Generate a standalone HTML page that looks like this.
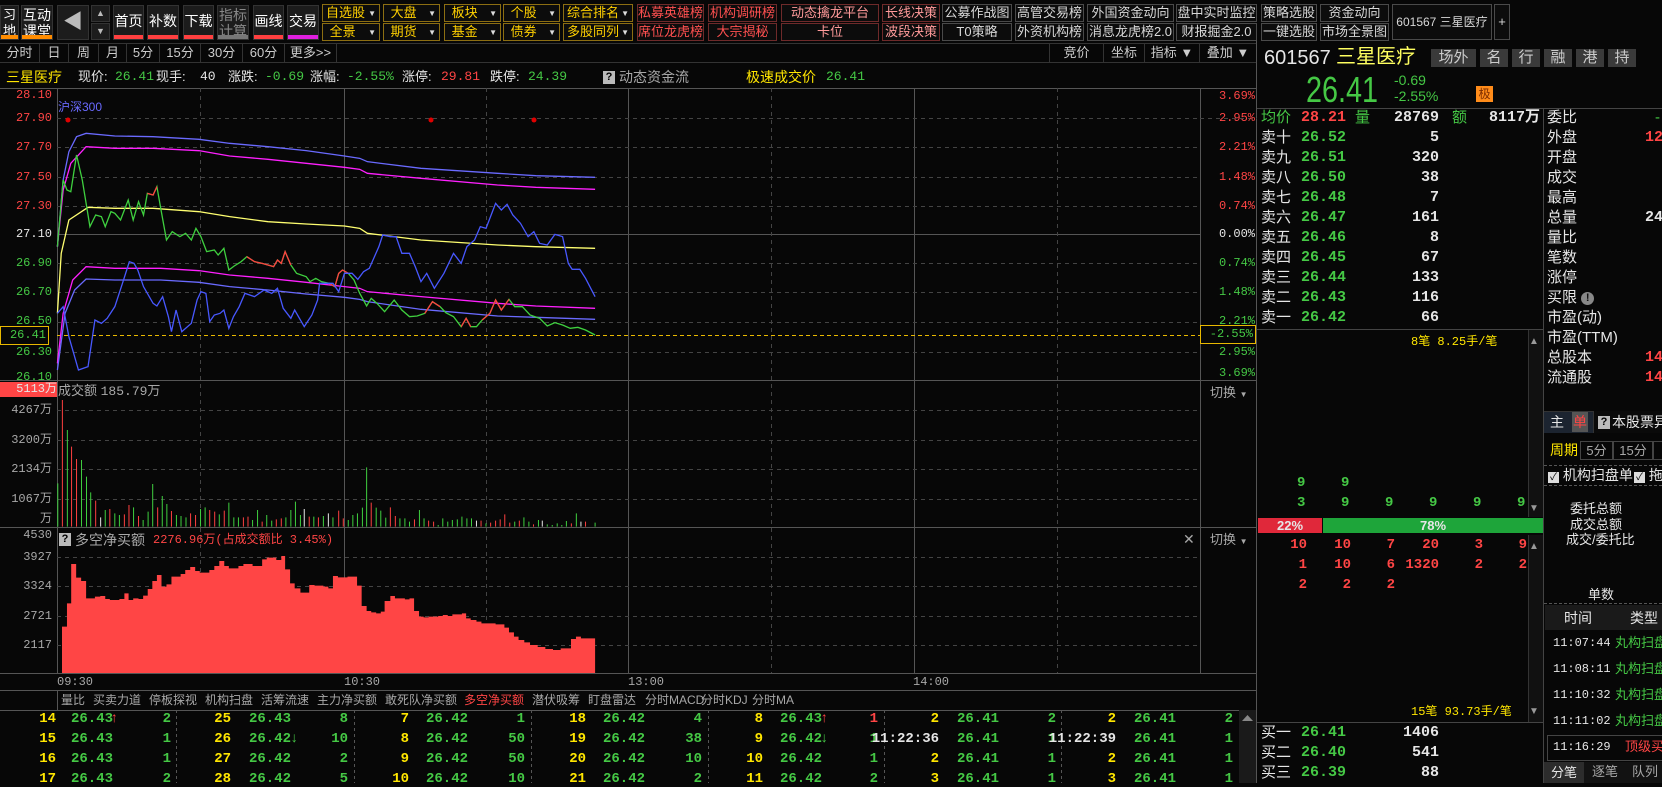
<!DOCTYPE html>
<html><head><meta charset="utf-8">
<style>
*{margin:0;padding:0;box-sizing:border-box}
body{width:1662px;height:783px;background:#070707;overflow:hidden;position:relative;font-family:"Liberation Sans","Noto Sans CJK SC",sans-serif;font-size:13px;color:#d0d0d0}
.a{position:absolute;white-space:nowrap;line-height:16px}
.y{color:#ffe600}.g{color:#45c845}.r{color:#ff4545}.w{color:#e6e6e6}.gr{color:#a8a8a8}
.tb{position:absolute;height:18px;line-height:16px;font-size:13px;text-align:left;padding-left:3px}
.dd{border:1px solid #8c6e12;color:#ffd000;background:#0c0c0c}
.dd:after{content:"▼";position:absolute;right:3px;top:1px;font-size:8px;color:#ddd}
.rd{border:1px solid #6e2a2a;color:#ff5050;background:#0c0c0c;text-align:center;padding:0}
.pk{border:1px solid #6e2a2a;color:#ff9a9a;background:#0c0c0c;text-align:center;padding:0}
.gy{border:1px solid #4a4a4a;color:#d8d8d8;background:#0c0c0c;text-align:center;padding:0}
.big{position:absolute;top:5px;height:35px;background:#1c1c1c;border:1px solid #333;color:#fff;font-size:14px;text-align:center;line-height:16px}
.big i{position:absolute;left:0;right:0;bottom:0;height:4px}
.tab{position:absolute;top:44px;height:18px;border-right:1px solid #333;text-align:center;line-height:18px;color:#ccc}
.m{font-family:"Liberation Mono","Noto Sans CJK SC",monospace}
.ob{font-size:15px;font-weight:bold}
.wr{position:absolute;left:0;top:0;width:1662px;height:783px}
.il{font-size:13px}
</style></head><body>

<div class="big" style="left:0;width:19px;font-size:13px;padding-top:1px">习<br>地<i style="background:#ff8c00"></i></div>
<div class="big" style="left:21px;width:32px;padding-top:1px">互动<br>课堂<i style="background:#ff8c00"></i></div>
<div class="big" style="left:57px;width:32px;line-height:33px;color:#bbb;font-size:20px">◀</div>
<div class="big" style="left:91px;width:19px;height:17px;font-size:9px;line-height:15px;color:#bbb">▲</div>
<div class="big" style="left:91px;top:23px;width:19px;height:17px;font-size:9px;line-height:15px;color:#bbb">▼</div>
<div class="big" style="left:113px;width:31px;line-height:30px">首页<i style="background:#ff4040"></i></div>
<div class="big" style="left:147px;width:32px;line-height:30px">补数<i style="background:#ff4040"></i></div>
<div class="big" style="left:183px;width:31px;line-height:30px">下载<i style="background:#ff4040"></i></div>
<div class="big" style="left:217px;width:32px;color:#888;padding-top:1px">指标<br>计算<i style="background:#777"></i></div>
<div class="big" style="left:253px;width:31px;line-height:30px">画线<i style="background:#ff4040"></i></div>
<div class="big" style="left:287px;width:32px;line-height:30px">交易<i style="background:#e020e0"></i></div>

<div class="tb dd" style="left:322px;top:4px;width:58px">自选股</div>
<div class="tb dd" style="left:383px;top:4px;width:57px">&nbsp;大盘</div>
<div class="tb dd" style="left:444px;top:4px;width:57px">&nbsp;板块</div>
<div class="tb dd" style="left:503px;top:4px;width:57px">&nbsp;个股</div>
<div class="tb dd" style="left:563px;top:4px;width:70px">综合排名</div>
<div class="tb rd" style="left:637px;top:4px;width:67px">私募英雄榜</div>
<div class="tb rd" style="left:708px;top:4px;width:69px">机构调研榜</div>
<div class="tb pk" style="left:781px;top:4px;width:98px">动态擒龙平台2.0</div>
<div class="tb pk" style="left:882px;top:4px;width:58px">长线决策</div>
<div class="tb gy" style="left:942px;top:4px;width:70px">公募作战图</div>
<div class="tb gy" style="left:1015px;top:4px;width:69px">高管交易榜</div>
<div class="tb gy" style="left:1087px;top:4px;width:87px">外国资金动向</div>
<div class="tb gy" style="left:1176px;top:4px;width:81px">盘中实时监控</div>
<div class="tb gy" style="left:1261px;top:4px;width:56px">策略选股</div>
<div class="tb gy" style="left:1320px;top:4px;width:69px">资金动向</div>
<div class="tb gy" style="left:1392px;top:4px;width:100px;height:36px;line-height:34px;font-size:12px">601567 三星医疗</div>
<div class="tb gy" style="left:1494px;top:4px;width:16px;height:36px;line-height:34px">+</div>
<div class="tb dd" style="left:322px;top:23px;width:58px">&nbsp;全景</div>
<div class="tb dd" style="left:383px;top:23px;width:57px">&nbsp;期货</div>
<div class="tb dd" style="left:444px;top:23px;width:57px">&nbsp;基金</div>
<div class="tb dd" style="left:503px;top:23px;width:57px">&nbsp;债券</div>
<div class="tb dd" style="left:563px;top:23px;width:70px">多股同列</div>
<div class="tb rd" style="left:637px;top:23px;width:67px">席位龙虎榜</div>
<div class="tb rd" style="left:708px;top:23px;width:69px">大宗揭秘</div>
<div class="tb pk" style="left:781px;top:23px;width:98px">卡位</div>
<div class="tb pk" style="left:882px;top:23px;width:58px">波段决策</div>
<div class="tb gy" style="left:942px;top:23px;width:70px">T0策略</div>
<div class="tb gy" style="left:1015px;top:23px;width:69px">外资机构榜</div>
<div class="tb gy" style="left:1087px;top:23px;width:87px">消息龙虎榜2.0</div>
<div class="tb gy" style="left:1176px;top:23px;width:81px">财报掘金2.0</div>
<div class="tb gy" style="left:1261px;top:23px;width:56px">一键选股</div>
<div class="tb gy" style="left:1320px;top:23px;width:69px">市场全景图</div>

<div style="position:absolute;left:0;top:43px;width:1257px;height:1px;background:#333"></div>
<div style="position:absolute;left:0;top:62px;width:1257px;height:1px;background:#333"></div>
<div class="tab r" style="left:0;width:40px">分时</div>
<div class="tab" style="left:40px;width:29px">日</div>
<div class="tab" style="left:69px;width:30px">周</div>
<div class="tab" style="left:99px;width:28px">月</div>
<div class="tab" style="left:127px;width:33px">5分</div>
<div class="tab" style="left:160px;width:41px">15分</div>
<div class="tab" style="left:201px;width:42px">30分</div>
<div class="tab" style="left:243px;width:42px">60分</div>
<div class="tab" style="left:285px;width:52px">更多&gt;&gt;</div>
<div class="tab" style="left:1049px;width:55px;border-left:1px solid #333">竞价</div>
<div class="tab" style="left:1104px;width:41px">坐标</div>
<div class="tab" style="left:1145px;width:55px">指标 ▼</div>
<div class="tab" style="left:1200px;width:57px">叠加 ▼</div>

<div class="a y il" style="left:6px;top:69px;font-size:14px">三星医疗</div>
<div class="a w il" style="left:78px;top:69px">现价:</div><div class="a g m" style="left:115px;top:69px">26.41</div>
<div class="a w il" style="left:156px;top:69px">现手:</div><div class="a w m" style="left:200px;top:69px">40</div>
<div class="a w il" style="left:228px;top:69px">涨跌:</div><div class="a g m" style="left:265px;top:69px">-0.69</div>
<div class="a w il" style="left:310px;top:69px">涨幅:</div><div class="a g m" style="left:347px;top:69px">-2.55%</div>
<div class="a w il" style="left:402px;top:69px">涨停:</div><div class="a r m" style="left:441px;top:69px">29.81</div>
<div class="a w il" style="left:490px;top:69px">跌停:</div><div class="a g m" style="left:528px;top:69px">24.39</div>
<div class="a" style="left:603px;top:71px;width:12px;height:13px;background:#bbb;color:#000;font-size:11px;line-height:13px;text-align:center;font-weight:bold">?</div>
<div class="a gr" style="left:619px;top:69px;font-size:14px">动态资金流</div>
<div class="a y" style="left:746px;top:69px;font-size:14px">极速成交价</div><div class="a g m" style="left:826px;top:69px">26.41</div>

<svg style="position:absolute;left:0;top:0" width="1257" height="783">
<g stroke="#555" stroke-width="1" fill="none">
<line x1="57.5" y1="88" x2="57.5" y2="673"/>
<line x1="1200.5" y1="88" x2="1200.5" y2="673"/>
<line x1="0" y1="88.5" x2="1257" y2="88.5"/>
<line x1="0" y1="380.5" x2="1257" y2="380.5"/>
<line x1="0" y1="527.5" x2="1257" y2="527.5"/>
<line x1="0" y1="673.5" x2="1257" y2="673.5"/>
<line x1="0" y1="690.5" x2="1257" y2="690.5"/>
<line x1="0" y1="710.5" x2="1257" y2="710.5"/>
<line x1="1256.5" y1="40" x2="1256.5" y2="783"/>
<line x1="344.5" y1="88" x2="344.5" y2="673"/>
<line x1="628.5" y1="88" x2="628.5" y2="673"/>
<line x1="914.5" y1="88" x2="914.5" y2="673"/>
<line x1="57.5" y1="234.5" x2="1200" y2="234.5"/>
</g>
<g stroke="#444" stroke-width="1" stroke-dasharray="4,4" fill="none">
<line x1="200.5" y1="88" x2="200.5" y2="673"/><line x1="486.5" y1="88" x2="486.5" y2="673"/>
<line x1="771.5" y1="88" x2="771.5" y2="673"/><line x1="1057.5" y1="88" x2="1057.5" y2="673"/>
<line x1="57" y1="118.5" x2="1200" y2="118.5"/><line x1="57" y1="147.5" x2="1200" y2="147.5"/>
<line x1="57" y1="177.5" x2="1200" y2="177.5"/><line x1="57" y1="206.5" x2="1200" y2="206.5"/>
<line x1="57" y1="263.5" x2="1200" y2="263.5"/><line x1="57" y1="292.5" x2="1200" y2="292.5"/>
<line x1="57" y1="322.5" x2="1200" y2="322.5"/><line x1="57" y1="352.5" x2="1200" y2="352.5"/>
<line x1="57" y1="410.5" x2="1200" y2="410.5"/><line x1="57" y1="440.5" x2="1200" y2="440.5"/>
<line x1="57" y1="469.5" x2="1200" y2="469.5"/><line x1="57" y1="499.5" x2="1200" y2="499.5"/>
<line x1="57" y1="557.5" x2="1200" y2="557.5"/><line x1="57" y1="586.5" x2="1200" y2="586.5"/>
<line x1="57" y1="616.5" x2="1200" y2="616.5"/><line x1="57" y1="645.5" x2="1200" y2="645.5"/>
<line x1="1200" y1="118.5" x2="1257" y2="118.5"/>
</g>
<line x1="57" y1="335.5" x2="1200" y2="335.5" stroke="#e8b800" stroke-dasharray="4,3"/>

<g transform="translate(0,80) scale(0.38270,0.33333)" fill="none" stroke-width="1.3">
<polyline vector-effect="non-scaling-stroke" stroke="#6a6aff" points="150,500 165,300 180,215 200,170 225,160 300,168 400,170 520,178 600,190 700,200 800,212 900,228 940,235 960,245 1100,265 1300,280 1400,287 1555,292"/>
<polyline vector-effect="non-scaling-stroke" stroke="#ff20ff" points="150,500 165,330 185,250 225,200 300,205 400,205 520,212 600,228 700,238 800,250 900,262 940,268 960,280 1100,295 1300,315 1400,322 1555,328"/>
<polyline vector-effect="non-scaling-stroke" stroke="#ffff70" points="150,700 160,520 180,420 230,382 300,385 400,385 520,395 600,410 700,425 800,432 900,438 940,445 960,460 1100,480 1300,495 1400,500 1555,505"/>
<polyline vector-effect="non-scaling-stroke" stroke="#ff20ff" points="150,850 165,700 190,600 225,560 300,565 420,565 520,572 600,585 700,595 800,607 900,620 940,625 960,635 1100,650 1300,670 1400,678 1555,685"/>
<polyline vector-effect="non-scaling-stroke" stroke="#6a6aff" points="150,870 170,700 195,630 225,597 300,600 420,600 520,607 600,620 700,630 800,642 900,652 940,658 960,665 1100,688 1300,708 1400,712 1555,718"/>
<polyline vector-effect="non-scaling-stroke" stroke="#3fd03f" points="150,500 165,300 175,330 185,335 200,225 215,300 235,440 250,405 265,410 275,440 290,395 300,400 315,420 335,360 348,420 362,365 375,405 385,340 400,345 410,320 420,385 435,480 450,455 470,470 485,460 500,480 512,445 525,470 540,515 560,510 570,525 585,505 598,570 612,558 630,545 645,530 665,545 685,550 700,555 715,560 725,540 735,550 745,515 760,555 775,580 800,590 810,605 825,595 840,605 860,610 875,620 885,580 895,570 910,580 925,600 940,640 958,678 970,655 985,670 1005,695 1030,660 1050,690 1070,710 1090,708 1110,700 1130,665 1150,680 1165,698 1185,710 1205,740 1218,715 1230,740 1245,740 1260,720 1280,700 1295,660 1310,690 1330,658 1345,680 1365,680 1385,705 1410,715 1430,738 1450,728 1470,735 1490,745 1510,742 1530,750 1555,765"/>
<polyline vector-effect="non-scaling-stroke" stroke="#ff4040" points="385,340 400,345 410,320"/>
<polyline vector-effect="non-scaling-stroke" stroke="#ff4040" points="645,530 665,545 685,550 700,555 715,560 725,540 735,550 745,515 760,555"/>
<polyline vector-effect="non-scaling-stroke" stroke="#ff4040" points="860,610 875,620 885,580 895,570 910,580"/>
<polyline vector-effect="non-scaling-stroke" stroke="#ff4040" points="1110,700 1130,665 1150,680"/>
<polyline vector-effect="non-scaling-stroke" stroke="#ff4040" points="1205,740 1218,715 1230,740"/>
<polyline vector-effect="non-scaling-stroke" stroke="#ff4040" points="1260,720 1280,700 1295,660 1310,690 1330,658"/>
<polyline vector-effect="non-scaling-stroke" stroke="#4858ff" points="150,700 165,680 180,770 205,870 230,860 248,720 265,730 280,715 300,680 320,610 338,545 350,550 360,570 375,620 400,670 410,678 425,650 440,710 448,755 460,690 475,755 500,730 515,660 525,635 538,640 548,725 560,705 575,700 585,690 598,745 610,710 625,680 640,640 665,650 690,630 710,640 725,625 740,685 760,715 770,690 795,740 815,705 830,660 835,610 850,610 870,610 885,635 900,580 920,580 935,598 950,575 965,565 990,500 1000,465 1020,470 1035,470 1050,520 1070,520 1085,560 1100,605 1115,580 1135,625 1160,580 1185,520 1205,550 1220,500 1240,480 1255,440 1270,445 1285,400 1295,370 1310,390 1325,373 1340,405 1360,430 1380,470 1395,455 1410,490 1430,495 1450,463 1470,470 1485,550 1495,568 1515,568 1530,595 1555,650"/>
</g>
<circle cx="68" cy="120" r="2.5" fill="#e00000"/><circle cx="431" cy="120" r="2.5" fill="#e00000"/><circle cx="534" cy="120" r="2.5" fill="#e00000"/>
<text x="58" y="111" fill="#6a6aff" font-size="12" font-family="Liberation Sans,Noto Sans CJK SC,sans-serif">沪深300</text>

<g transform="translate(0,355) scale(0.38270,0.33333)">
<g stroke-width="2.6">
<path stroke="#3fd03f" d="M151 515V385M176 515V225M213 515V315M226 515V365M237 515V412M275 515V465M300 515V475M312 515V480M349 515V457M374 515V495M387 515V470M399 515V387M424 515V423M436 515V447M461 515V480M473 515V483M486 515V487M524 515V462M536 515V457M573 515V478M598 515V443M611 515V487M623 515V487M660 515V495M673 515V465M697 515V480M710 515V497M747 515V487M760 515V465M772 515V440M785 515V480M820 515V485M845 515V483M870 515V487M910 515V495M922 515V480M934 515V475M947 515V458M958 515V337M983 515V458M995 515V467M1008 515V488M1045 515V490M1058 515V490M1070 515V500M1096 515V465M1108 515V490M1145 515V510M1157 515V490M1170 515V500M1182 515V495M1195 515V493M1207 515V485M1220 515V490M1232 515V490M1270 515V505M1345 515V500M1369 515V487M1382 515V500M1407 515V495M1430 515V508M1443 515V510M1456 515V505M1468 515V510M1480 515V498M1506 515V475M1555 515V503"/>
<path stroke="#ff4040" d="M163 515V135M187 515V275M200 515V312M250 515V437M287 515V462M325 515V478M337 515V450M362 515V483M412 515V457M448 515V468M498 515V475M511 515V480M548 515V465M561 515V470M586 515V467M636 515V487M648 515V485M685 515V500M722 515V493M735 515V490M808 515V485M832 515V487M885 515V467M897 515V490M970 515V443M1020 515V457M1033 515V483M1083 515V493M1120 515V497M1133 515V500M1257 515V497M1282 515V503M1295 515V497M1307 515V493M1319 515V478M1332 515V503M1357 515V497M1394 515V508M1493 515V505M1530 515V500"/>
<path stroke="#e8e8e8" d="M263 515V487M795 515V462M858 515V475M1245 515V497M1417 515V497M1518 515V500"/>
</g>
<polygon fill="#ff4545" points="162,954 162,815 175,815 175,745 186,745 186,627 199,627 199,668 212,668 212,678 225,678 225,730 248,730 248,725 262,725 262,723 275,723 275,732 287,732 287,735 312,735 312,732 325,732 325,715 336,715 336,735 348,735 348,730 362,730 362,732 374,732 374,722 386,722 386,702 398,702 398,678 410,678 410,660 422,660 422,695 435,695 435,688 448,688 448,665 472,665 472,657 484,657 484,645 497,645 497,636 510,636 510,648 522,648 522,653 547,653 547,645 560,645 560,633 573,633 573,618 586,618 586,633 598,633 598,640 623,640 623,633 636,633 636,627 660,627 660,633 685,633 685,613 697,613 697,608 722,608 722,615 735,615 735,603 745,603 745,643 758,643 758,685 770,685 770,700 785,700 785,713 808,713 808,690 822,690 822,692 845,692 845,695 858,695 858,700 870,700 870,663 883,663 883,667 908,667 908,665 933,665 933,692 945,692 945,753 958,753 958,768 970,768 970,772 983,772 983,775 995,775 995,770 1005,770 1005,738 1020,738 1020,723 1032,723 1032,730 1058,730 1058,733 1070,733 1070,730 1082,730 1082,768 1095,768 1095,785 1107,785 1107,787 1120,787 1120,785 1145,785 1145,783 1157,783 1157,780 1170,780 1170,783 1182,783 1182,778 1207,778 1207,775 1218,775 1218,790 1230,790 1230,795 1245,795 1245,800 1258,800 1258,805 1295,805 1295,808 1318,808 1318,818 1330,818 1330,832 1343,832 1343,845 1355,845 1355,855 1370,855 1370,862 1385,862 1385,870 1405,870 1405,876 1425,876 1425,882 1445,882 1445,885 1465,885 1465,880 1492,880 1492,852 1505,852 1505,845 1518,845 1518,850 1555,850 1555,954"/>
</g>
</svg>

<div class="a r m" style="right:1610px;top:87px;font-size:12px">28.10</div>
<div class="a r m" style="right:1610px;top:110px;font-size:12px">27.90</div>
<div class="a r m" style="right:1610px;top:139px;font-size:12px">27.70</div>
<div class="a r m" style="right:1610px;top:169px;font-size:12px">27.50</div>
<div class="a r m" style="right:1610px;top:198px;font-size:12px">27.30</div>
<div class="a w m" style="right:1610px;top:226px;font-size:12px">27.10</div>
<div class="a g m" style="right:1610px;top:255px;font-size:12px">26.90</div>
<div class="a g m" style="right:1610px;top:284px;font-size:12px">26.70</div>
<div class="a g m" style="right:1610px;top:313px;font-size:12px">26.50</div>
<div class="a g m" style="left:0;top:326px;width:49px;height:19px;border:1px solid #e8b800;text-align:right;padding-right:2px;line-height:17px;font-size:12px;background:#070707">26.41</div>
<div class="a g m" style="right:1610px;top:344px;font-size:12px">26.30</div>
<div class="a g m" style="right:1610px;top:369px;font-size:12px">26.10</div>
<div class="a r m" style="right:407px;top:88px;font-size:12px">3.69%</div>
<div class="a r m" style="right:407px;top:110px;font-size:12px">2.95%</div>
<div class="a r m" style="right:407px;top:139px;font-size:12px">2.21%</div>
<div class="a r m" style="right:407px;top:169px;font-size:12px">1.48%</div>
<div class="a r m" style="right:407px;top:198px;font-size:12px">0.74%</div>
<div class="a w m" style="right:407px;top:226px;font-size:12px">0.00%</div>
<div class="a g m" style="right:407px;top:255px;font-size:12px">0.74%</div>
<div class="a g m" style="right:407px;top:284px;font-size:12px">1.48%</div>
<div class="a g m" style="right:407px;top:313px;font-size:12px">2.21%</div>
<div class="a g m" style="left:1200px;top:325px;width:56px;height:19px;border:1px solid #e8b800;text-align:right;padding-right:2px;line-height:17px;font-size:12px;background:#070707">-2.55%</div>
<div class="a g m" style="right:407px;top:344px;font-size:12px">2.95%</div>
<div class="a g m" style="right:407px;top:365px;font-size:12px">3.69%</div>

<div class="a w m" style="left:0;top:382px;width:57px;height:15px;background:#ff4545;text-align:right;font-size:12px;line-height:15px">5113万</div>
<div class="a gr m" style="right:1610px;top:402px;font-size:12px">4267万</div>
<div class="a gr m" style="right:1610px;top:432px;font-size:12px">3200万</div>
<div class="a gr m" style="right:1610px;top:461px;font-size:12px">2134万</div>
<div class="a gr m" style="right:1610px;top:491px;font-size:12px">1067万</div>
<div class="a gr" style="right:1610px;top:510px;font-size:12px">万</div>
<div class="a gr" style="left:58px;top:383px;font-size:13px">成交额 <span class="m">185.79万</span></div>
<div class="a gr" style="left:1210px;top:385px">切换 <span style="font-size:8px">▼</span></div>

<div class="a gr m" style="right:1610px;top:527px;font-size:12px">4530</div>
<div class="a gr m" style="right:1610px;top:549px;font-size:12px">3927</div>
<div class="a gr m" style="right:1610px;top:578px;font-size:12px">3324</div>
<div class="a gr m" style="right:1610px;top:608px;font-size:12px">2721</div>
<div class="a gr m" style="right:1610px;top:637px;font-size:12px">2117</div>
<div class="a" style="left:59px;top:533px;width:12px;height:13px;background:#bbb;color:#000;font-size:11px;line-height:13px;text-align:center;font-weight:bold">?</div>
<div class="a gr" style="left:75px;top:532px;font-size:14px">多空净买额</div>
<div class="a r m" style="left:153px;top:532px;font-size:12px">2276.96万(占成交额比 3.45%)</div>
<div class="a gr" style="left:1183px;top:531px;font-size:14px">✕</div>
<div class="a gr" style="left:1210px;top:532px">切换 <span style="font-size:8px">▼</span></div>

<div class="a gr m" style="left:57px;top:674px;font-size:12px">09:30</div>
<div class="a gr m" style="left:344px;top:674px;font-size:12px">10:30</div>
<div class="a gr m" style="left:628px;top:674px;font-size:12px">13:00</div>
<div class="a gr m" style="left:913px;top:674px;font-size:12px">14:00</div>

<div class="a gr" style="left:61px;top:692px;font-size:12px">量比</div>
<div class="a gr" style="left:93px;top:692px;font-size:12px">买卖力道</div>
<div class="a gr" style="left:149px;top:692px;font-size:12px">停板探视</div>
<div class="a gr" style="left:205px;top:692px;font-size:12px">机构扫盘</div>
<div class="a gr" style="left:261px;top:692px;font-size:12px">活筹流速</div>
<div class="a gr" style="left:317px;top:692px;font-size:12px">主力净买额</div>
<div class="a gr" style="left:385px;top:692px;font-size:12px">敢死队净买额</div>
<div class="a r" style="left:464px;top:692px;font-size:12px">多空净买额</div>
<div class="a gr" style="left:532px;top:692px;font-size:12px">潜伏吸筹</div>
<div class="a gr" style="left:588px;top:692px;font-size:12px">盯盘雷达</div>
<div class="a gr" style="left:645px;top:692px;font-size:12px">分时MACD</div>
<div class="a gr" style="left:701px;top:692px;font-size:12px">分时KDJ</div>
<div class="a gr" style="left:752px;top:692px;font-size:12px">分时MA</div>
<div style="position:absolute;left:57px;top:690px;width:1px;height:20px;background:#555"></div>

<svg style="position:absolute;left:0;top:710px" width="1257" height="73">
<g stroke="#555" stroke-dasharray="3,3"><line x1="176.5" y1="0" x2="176.5" y2="73"/><line x1="354.5" y1="0" x2="354.5" y2="73"/><line x1="531.5" y1="0" x2="531.5" y2="73"/><line x1="708.5" y1="0" x2="708.5" y2="73"/><line x1="884.5" y1="0" x2="884.5" y2="73"/><line x1="1061.5" y1="0" x2="1061.5" y2="73"/></g>
<rect x="1239" y="0" width="17" height="73" fill="#1a1a1a"/><path d="M1242 11 L1247.5 5 L1253 11Z" fill="#888"/>
</svg>
<div class="m" style="position:absolute;left:0;top:711px;width:1662px;height:72px;font-size:14px;font-weight:bold;line-height:20px">
<div class="a y" style="right:1606px;top:0">14</div><div class="a g" style="left:71px;top:0">26.43</div><div class="a r" style="left:110px;top:0;font-weight:normal">↑</div><div class="a g" style="right:1491px;top:0">2</div>
<div class="a y" style="right:1606px;top:20px">15</div><div class="a g" style="left:71px;top:20px">26.43</div><div class="a g" style="right:1491px;top:20px">1</div>
<div class="a y" style="right:1606px;top:40px">16</div><div class="a g" style="left:71px;top:40px">26.43</div><div class="a g" style="right:1491px;top:40px">1</div>
<div class="a y" style="right:1606px;top:60px">17</div><div class="a g" style="left:71px;top:60px">26.43</div><div class="a g" style="right:1491px;top:60px">2</div>
<div class="a y" style="right:1431px;top:0">25</div><div class="a g" style="left:249px;top:0">26.43</div><div class="a g" style="right:1314px;top:0">8</div>
<div class="a y" style="right:1431px;top:20px">26</div><div class="a g" style="left:249px;top:20px">26.42</div><div class="a g" style="left:290px;top:20px;font-weight:normal">↓</div><div class="a g" style="right:1314px;top:20px">10</div>
<div class="a y" style="right:1431px;top:40px">27</div><div class="a g" style="left:249px;top:40px">26.42</div><div class="a g" style="right:1314px;top:40px">2</div>
<div class="a y" style="right:1431px;top:60px">28</div><div class="a g" style="left:249px;top:60px">26.42</div><div class="a g" style="right:1314px;top:60px">5</div>
<div class="a y" style="right:1253px;top:0">7</div><div class="a g" style="left:426px;top:0">26.42</div><div class="a g" style="right:1137px;top:0">1</div>
<div class="a y" style="right:1253px;top:20px">8</div><div class="a g" style="left:426px;top:20px">26.42</div><div class="a g" style="right:1137px;top:20px">50</div>
<div class="a y" style="right:1253px;top:40px">9</div><div class="a g" style="left:426px;top:40px">26.42</div><div class="a g" style="right:1137px;top:40px">50</div>
<div class="a y" style="right:1253px;top:60px">10</div><div class="a g" style="left:426px;top:60px">26.42</div><div class="a g" style="right:1137px;top:60px">10</div>
<div class="a y" style="right:1076px;top:0">18</div><div class="a g" style="left:603px;top:0">26.42</div><div class="a g" style="right:960px;top:0">4</div>
<div class="a y" style="right:1076px;top:20px">19</div><div class="a g" style="left:603px;top:20px">26.42</div><div class="a g" style="right:960px;top:20px">38</div>
<div class="a y" style="right:1076px;top:40px">20</div><div class="a g" style="left:603px;top:40px">26.42</div><div class="a g" style="right:960px;top:40px">10</div>
<div class="a y" style="right:1076px;top:60px">21</div><div class="a g" style="left:603px;top:60px">26.42</div><div class="a g" style="right:960px;top:60px">2</div>
<div class="a y" style="right:899px;top:0">8</div><div class="a g" style="left:780px;top:0">26.43</div><div class="a r" style="left:820px;top:0;font-weight:normal">↑</div><div class="a r" style="right:784px;top:0">1</div>
<div class="a y" style="right:899px;top:20px">9</div><div class="a g" style="left:780px;top:20px">26.42</div><div class="a g" style="left:820px;top:20px;font-weight:normal">↓</div><div class="a g" style="right:784px;top:20px">1</div>
<div class="a y" style="right:899px;top:40px">10</div><div class="a g" style="left:780px;top:40px">26.42</div><div class="a g" style="right:784px;top:40px">1</div>
<div class="a y" style="right:899px;top:60px">11</div><div class="a g" style="left:780px;top:60px">26.42</div><div class="a g" style="right:784px;top:60px">2</div>
<div class="a y" style="right:723px;top:0">2</div><div class="a g" style="left:957px;top:0">26.41</div><div class="a g" style="right:606px;top:0">2</div>
<div class="a w" style="right:723px;top:20px">11:22:36</div><div class="a g" style="left:957px;top:20px">26.41</div><div class="a g" style="right:606px;top:20px">1</div>
<div class="a y" style="right:723px;top:40px">2</div><div class="a g" style="left:957px;top:40px">26.41</div><div class="a g" style="right:606px;top:40px">1</div>
<div class="a y" style="right:723px;top:60px">3</div><div class="a g" style="left:957px;top:60px">26.41</div><div class="a g" style="right:606px;top:60px">1</div>
<div class="a y" style="right:546px;top:0">2</div><div class="a g" style="left:1134px;top:0">26.41</div><div class="a g" style="right:429px;top:0">2</div>
<div class="a w" style="right:546px;top:20px">11:22:39</div><div class="a g" style="left:1134px;top:20px">26.41</div><div class="a g" style="right:429px;top:20px">1</div>
<div class="a y" style="right:546px;top:40px">2</div><div class="a g" style="left:1134px;top:40px">26.41</div><div class="a g" style="right:429px;top:40px">1</div>
<div class="a y" style="right:546px;top:60px">3</div><div class="a g" style="left:1134px;top:60px">26.41</div><div class="a g" style="right:429px;top:60px">1</div>
</div>

<div class="a w" style="left:1264px;top:47px;font-size:20px;line-height:22px">601567</div>
<div class="a" style="left:1336px;top:46px;font-size:20px;line-height:22px;color:#ffff60">三星医疗</div>
<div class="a" style="left:1431px;top:49px;width:45px;height:18px;background:#3a3a3a;color:#ccc;font-size:15px;line-height:18px;text-align:center">场外</div>
<div class="a" style="left:1480px;top:49px;width:28px;height:18px;background:#3a3a3a;color:#ccc;font-size:15px;line-height:18px;text-align:center">名</div>
<div class="a" style="left:1512px;top:49px;width:28px;height:18px;background:#3a3a3a;color:#ccc;font-size:15px;line-height:18px;text-align:center">行</div>
<div class="a" style="left:1544px;top:49px;width:28px;height:18px;background:#3a3a3a;color:#ccc;font-size:15px;line-height:18px;text-align:center">融</div>
<div class="a" style="left:1576px;top:49px;width:28px;height:18px;background:#3a3a3a;color:#ccc;font-size:15px;line-height:18px;text-align:center">港</div>
<div class="a" style="left:1608px;top:49px;width:28px;height:18px;background:#3a3a3a;color:#ccc;font-size:15px;line-height:18px;text-align:center">持</div>
<div class="a g" style="left:1306px;top:70px;font-size:36px;line-height:40px;transform:scaleX(0.8);transform-origin:0 0">26.41</div>
<div class="a g" style="left:1394px;top:72px;font-size:14px">-0.69</div>
<div class="a g" style="left:1394px;top:88px;font-size:14px">-2.55%</div>
<div class="a" style="left:1476px;top:86px;width:17px;height:16px;background:#ff8c1a;color:#7a2b00;font-size:12px;line-height:16px;text-align:center">极</div>
<div style="position:absolute;left:1257px;top:108px;width:405px;height:1px;background:#444"></div>
<div style="position:absolute;left:1543px;top:108px;width:1px;height:675px;background:#444"></div>
<div style="position:absolute;left:1257px;top:329px;width:286px;height:1px;background:#444"></div>
<div style="position:absolute;left:1257px;top:722px;width:286px;height:1px;background:#444"></div>

<div class="wr" style="font-size:15px;line-height:18px">
<div class="a g" style="left:1261px;top:110px;font-size:15px">均价</div><div class="a r m ob" style="left:1301px;top:110px">28.21</div>
<div class="a g" style="left:1355px;top:110px;font-size:15px">量</div><div class="a w m ob" style="right:223px;top:110px">28769</div>
<div class="a g" style="left:1452px;top:110px;font-size:15px">额</div><div class="a w m ob" style="right:122px;top:110px">8117万</div>
</div>
<div class="wr">
<div class="a w" style="left:1261px;top:130px;font-size:15px">卖十</div><div class="a g m ob" style="left:1301px;top:130px">26.52</div><div class="a w m ob" style="right:223px;top:130px">5</div>
<div class="a w" style="left:1261px;top:150px;font-size:15px">卖九</div><div class="a g m ob" style="left:1301px;top:150px">26.51</div><div class="a w m ob" style="right:223px;top:150px">320</div>
<div class="a w" style="left:1261px;top:170px;font-size:15px">卖八</div><div class="a g m ob" style="left:1301px;top:170px">26.50</div><div class="a w m ob" style="right:223px;top:170px">38</div>
<div class="a w" style="left:1261px;top:190px;font-size:15px">卖七</div><div class="a g m ob" style="left:1301px;top:190px">26.48</div><div class="a w m ob" style="right:223px;top:190px">7</div>
<div class="a w" style="left:1261px;top:210px;font-size:15px">卖六</div><div class="a g m ob" style="left:1301px;top:210px">26.47</div><div class="a w m ob" style="right:223px;top:210px">161</div>
<div class="a w" style="left:1261px;top:230px;font-size:15px">卖五</div><div class="a g m ob" style="left:1301px;top:230px">26.46</div><div class="a w m ob" style="right:223px;top:230px">8</div>
<div class="a w" style="left:1261px;top:250px;font-size:15px">卖四</div><div class="a g m ob" style="left:1301px;top:250px">26.45</div><div class="a w m ob" style="right:223px;top:250px">67</div>
<div class="a w" style="left:1261px;top:270px;font-size:15px">卖三</div><div class="a g m ob" style="left:1301px;top:270px">26.44</div><div class="a w m ob" style="right:223px;top:270px">133</div>
<div class="a w" style="left:1261px;top:290px;font-size:15px">卖二</div><div class="a g m ob" style="left:1301px;top:290px">26.43</div><div class="a w m ob" style="right:223px;top:290px">116</div>
<div class="a w" style="left:1261px;top:310px;font-size:15px">卖一</div><div class="a g m ob" style="left:1301px;top:310px">26.42</div><div class="a w m ob" style="right:223px;top:310px">66</div>
<div class="a w" style="left:1261px;top:725px;font-size:15px">买一</div><div class="a g m ob" style="left:1301px;top:725px">26.41</div><div class="a w m ob" style="right:223px;top:725px">1406</div>
<div class="a w" style="left:1261px;top:745px;font-size:15px">买二</div><div class="a g m ob" style="left:1301px;top:745px">26.40</div><div class="a w m ob" style="right:223px;top:745px">541</div>
<div class="a w" style="left:1261px;top:765px;font-size:15px">买三</div><div class="a g m ob" style="left:1301px;top:765px">26.39</div><div class="a w m ob" style="right:223px;top:765px">88</div>
</div>

<div class="a y m" style="left:1411px;top:334px;font-size:12px">8笔 8.25手/笔</div>
<div style="position:absolute;left:1528px;top:330px;width:15px;height:187px;background:#111;border-left:1px solid #333"></div>
<div class="a" style="left:1529px;top:334px;color:#999;font-size:10px">▲</div>
<div class="a" style="left:1529px;top:501px;color:#999;font-size:10px">▼</div>
<div class="wr m" style="font-size:14px;font-weight:bold">
<div class="a g" style="left:1297px;top:475px">9</div><div class="a g" style="left:1341px;top:475px">9</div>
<div class="a g" style="left:1297px;top:495px">3</div><div class="a g" style="left:1341px;top:495px">9</div><div class="a g" style="left:1385px;top:495px">9</div><div class="a g" style="left:1429px;top:495px">9</div><div class="a g" style="left:1473px;top:495px">9</div><div class="a g" style="left:1517px;top:495px">9</div>
<div class="a r" style="right:355px;top:537px">10</div><div class="a r" style="right:311px;top:537px">10</div><div class="a r" style="right:267px;top:537px">7</div><div class="a r" style="right:223px;top:537px">20</div><div class="a r" style="right:179px;top:537px">3</div><div class="a r" style="right:135px;top:537px">9</div>
<div class="a r" style="right:355px;top:557px">1</div><div class="a r" style="right:311px;top:557px">10</div><div class="a r" style="right:267px;top:557px">6</div><div class="a r" style="right:223px;top:557px">1320</div><div class="a r" style="right:179px;top:557px">2</div><div class="a r" style="right:135px;top:557px">2</div>
<div class="a r" style="right:355px;top:577px">2</div><div class="a r" style="right:311px;top:577px">2</div><div class="a r" style="right:267px;top:577px">2</div>
</div>
<div class="a w" style="left:1258px;top:518px;width:64px;height:15px;background:#e0283a;text-align:center;line-height:15px;font-size:13px;font-weight:bold">22%</div>
<div class="a w" style="left:1323px;top:518px;width:220px;height:15px;background:#1ea53a;text-align:center;line-height:15px;font-size:13px;font-weight:bold">78%</div>
<div style="position:absolute;left:1528px;top:535px;width:15px;height:187px;background:#111;border-left:1px solid #333"></div>
<div class="a" style="left:1529px;top:539px;color:#999;font-size:10px">▲</div>
<div class="a" style="left:1529px;top:704px;color:#999;font-size:10px">▼</div>
<div class="a y m" style="left:1411px;top:704px;font-size:12px">15笔 93.73手/笔</div>

<div class="wr" style="font-size:15px">
<div class="a w" style="left:1547px;top:110px">委比</div><div class="a g" style="left:1655px;top:110px">-</div>
<div class="a w" style="left:1547px;top:130px">外盘</div><div class="a r m ob" style="left:1645px;top:130px">12</div>
<div class="a w" style="left:1547px;top:150px">开盘</div>
<div class="a w" style="left:1547px;top:170px">成交</div>
<div class="a w" style="left:1547px;top:190px">最高</div>
<div class="a w" style="left:1547px;top:210px">总量</div><div class="a w m ob" style="left:1645px;top:210px">24</div>
<div class="a w" style="left:1547px;top:230px">量比</div>
<div class="a w" style="left:1547px;top:250px">笔数</div>
<div class="a w" style="left:1547px;top:270px">涨停</div>
<div class="a w" style="left:1547px;top:290px">买限 <span style="display:inline-block;width:13px;height:13px;border-radius:50%;background:#888;color:#111;font-size:11px;line-height:13px;text-align:center;font-weight:bold;vertical-align:1px">!</span></div>
<div class="a w" style="left:1547px;top:310px">市盈(动)</div>
<div class="a w" style="left:1547px;top:330px">市盈(TTM)</div>
<div class="a w" style="left:1547px;top:350px">总股本</div><div class="a r m ob" style="left:1645px;top:350px">14</div>
<div class="a w" style="left:1547px;top:370px">流通股</div><div class="a r m ob" style="left:1645px;top:370px">14</div>
</div>
<div style="position:absolute;left:1544px;top:411px;width:118px;height:22px;background:#1c2430;border-top:1px solid #333"></div>
<div class="a w" style="left:1550px;top:414px;font-size:14px">主</div>
<div class="a r" style="left:1572px;top:412px;width:16px;height:20px;background:#555;text-align:center;line-height:20px;font-size:14px">单</div>
<div style="position:absolute;left:1593px;top:411px;width:69px;height:22px;background:#0a0a0a;border-left:1px solid #333"></div>
<div class="a" style="left:1598px;top:416px;width:12px;height:13px;background:#bbb;color:#000;font-size:11px;line-height:13px;text-align:center;font-weight:bold">?</div>
<div class="a w" style="left:1612px;top:414px;font-size:14px">本股票异</div>
<div class="a y" style="left:1550px;top:442px;font-size:14px">周期</div>
<div class="a gr" style="left:1580px;top:441px;width:33px;height:19px;border:1px solid #444;text-align:center;line-height:17px">5分</div>
<div class="a gr" style="left:1613px;top:441px;width:40px;height:19px;border:1px solid #444;text-align:center;line-height:17px">15分</div>
<div class="a gr" style="left:1653px;top:441px;width:12px;height:19px;border:1px solid #444"></div>
<div style="position:absolute;left:1544px;top:465px;width:118px;border-top:1px dashed #555"></div>
<div class="a w" style="left:1548px;top:467px;font-size:14px"><span style="display:inline-block;width:11px;height:11px;background:#ddd;color:#000;font-size:10px;line-height:11px;text-align:center">✓</span> 机构扫盘单</div>
<div class="a w" style="left:1634px;top:467px;font-size:14px"><span style="display:inline-block;width:11px;height:11px;background:#ddd;color:#000;font-size:10px;line-height:11px;text-align:center">✓</span> 拖</div>
<div style="position:absolute;left:1544px;top:485px;width:118px;border-top:1px dashed #555"></div>
<div class="a w" style="left:1570px;top:501px;font-size:13px">委托总额</div>
<div class="a w" style="left:1570px;top:517px;font-size:13px">成交总额</div>
<div class="a w" style="left:1566px;top:532px;font-size:13px">成交/委托比</div>
<div class="a w" style="left:1588px;top:587px;font-size:13px">单数</div>
<div style="position:absolute;left:1544px;top:603px;width:118px;border-top:1px dashed #555"></div>
<div style="position:absolute;left:1545px;top:605px;width:117px;height:25px;background:#1a1a1a"></div>
<div class="a w" style="left:1564px;top:610px;font-size:14px">时间</div>
<div class="a w" style="left:1630px;top:610px;font-size:14px">类型</div>
<div class="a w m" style="left:1553px;top:635px;font-size:12px">11:07:44</div><div class="a g" style="left:1615px;top:635px">丸构扫盘</div>
<div class="a w m" style="left:1553px;top:661px;font-size:12px">11:08:11</div><div class="a g" style="left:1615px;top:661px">丸构扫盘</div>
<div class="a w m" style="left:1553px;top:687px;font-size:12px">11:10:32</div><div class="a g" style="left:1615px;top:687px">丸构扫盘</div>
<div class="a w m" style="left:1553px;top:713px;font-size:12px">11:11:02</div><div class="a g" style="left:1615px;top:713px">丸构扫盘</div>
<div style="position:absolute;left:1547px;top:735px;width:120px;height:26px;border:1px solid #444"></div>
<div class="a w m" style="left:1553px;top:739px;font-size:12px">11:16:29</div><div class="a r" style="left:1625px;top:739px">顶级买</div>
<div style="position:absolute;left:1544px;top:762px;width:118px;height:21px;background:#121212"></div>
<div class="a w" style="left:1544px;top:762px;width:40px;height:21px;background:#2c2c2c;text-align:center;line-height:21px;font-size:13px">分笔</div>
<div class="a gr" style="left:1592px;top:764px;font-size:13px">逐笔</div>
<div class="a gr" style="left:1632px;top:764px;font-size:13px">队列</div>
</body></html>
